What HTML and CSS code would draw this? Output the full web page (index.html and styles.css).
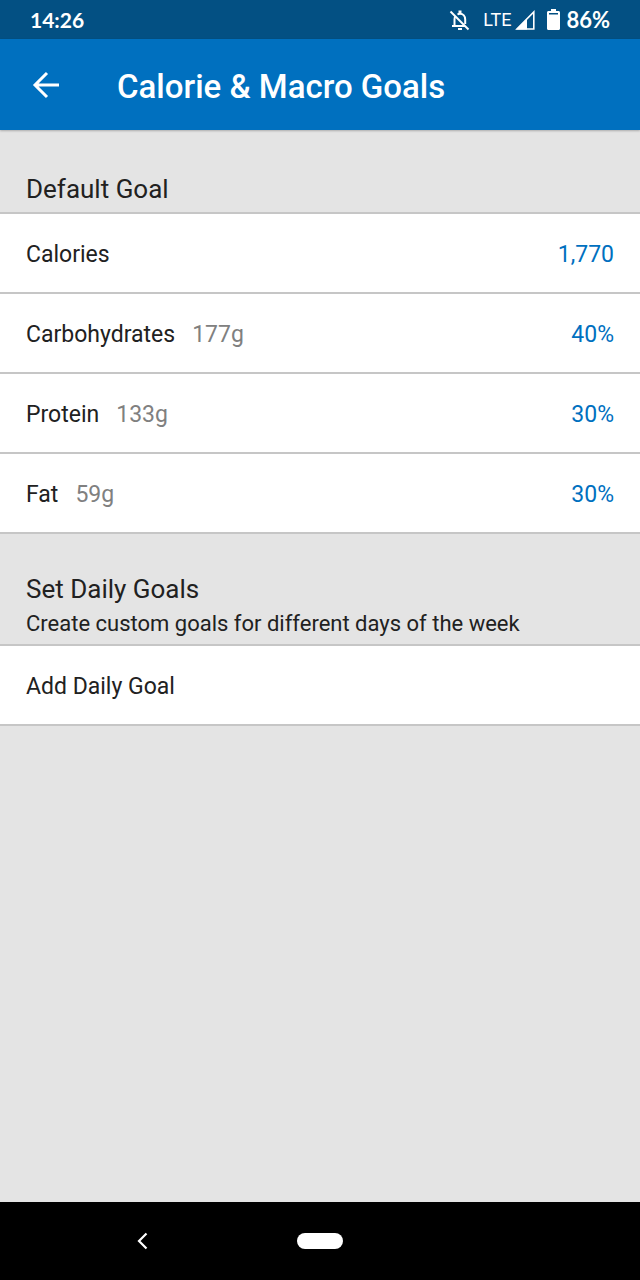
FILE: index.html
```html
<!DOCTYPE html>
<html lang="en">
<head>
    <meta charset="UTF-8">
    <meta name="viewport" content="width=device-width, initial-scale=1.0">
    <title>Calorie &amp; Macro Goals</title>
    <link rel="stylesheet" href="styles.css">
</head>
<body>
    <div class="status-bar">
        <span class="status-time">14:26</span>
        <div class="status-icons">
            <svg class="icon-bell" width="22" height="22" viewBox="0 0 22 22" fill="none" stroke="currentColor" stroke-width="2">
                <path d="M1.500 2.500l18 18"/>
                <path d="M3 17h13M5.500 17v-6.500c0-1.500.3-2.600 1-3.500M8.500 5.500c.8-.5 1.600-.7 2.500-.7 3.200 0 5.200 2.400 5.200 5.700v4.500"/>
                <path d="M11 1.500v3" stroke-width="3"/>
                <path d="M9 20h4"/>
            </svg>
            <span class="network">LTE</span>
            <svg class="icon-signal" width="20" height="20" viewBox="0 0 20 20">
                <path d="M18.800 2v17H2z" fill="none" stroke="currentColor" stroke-width="1.600"/>
                <path d="M12 8.500V19.500H1z" fill="currentColor"/>
            </svg>
            <svg class="icon-battery" width="13" height="21" viewBox="0 0 13 21">
                <path d="M4 0h5v2h2.500C12.400 2 13 2.600 13 3.500v16c0 .9-.6 1.500-1.500 1.500h-10C.6 21 0 20.400 0 19.500v-16C0 2.600.6 2 1.500 2H4z" fill="currentColor"/>
                <path d="M2 4h9v1.500H2z" fill="#035083"/>
            </svg>
            <span class="battery-level">86%</span>
        </div>
    </div>

    <header class="app-bar">
        <button class="back-button" type="button" aria-label="Back">
            <svg width="28" height="28" viewBox="0 0 28 28" fill="none" stroke="currentColor" stroke-width="3">
                <path d="M27 14H3M15 2L3 14l12 12"/>
            </svg>
        </button>
        <h1>Calorie &amp; Macro Goals</h1>
    </header>

    <main class="content">
        <div class="section-header">
            <h2>Default Goal</h2>
        </div>
        <ul class="goal-list">
            <li class="goal-row">
                <span class="goal-name">Calories</span>
                <button class="goal-value" type="button">1,770</button>
            </li>
            <li class="goal-row">
                <span class="goal-name">Carbohydrates</span>
                <span class="goal-grams">177g</span>
                <button class="goal-value" type="button">40%</button>
            </li>
            <li class="goal-row">
                <span class="goal-name">Protein</span>
                <span class="goal-grams">133g</span>
                <button class="goal-value" type="button">30%</button>
            </li>
            <li class="goal-row">
                <span class="goal-name">Fat</span>
                <span class="goal-grams">59g</span>
                <button class="goal-value" type="button">30%</button>
            </li>
        </ul>

        <div class="section-header">
            <h2>Set Daily Goals</h2>
            <p>Create custom goals for different days of the week</p>
        </div>
        <ul class="goal-list">
            <li><button class="goal-row add-goal" type="button">Add Daily Goal</button></li>
        </ul>
    </main>

    <nav class="nav-bar">
        <button class="nav-back" type="button" aria-label="System back">
            <svg width="12" height="18" viewBox="0 0 12 18" fill="none" stroke="currentColor" stroke-width="2.200">
                <path d="M10.500 1.500L3 9l7.500 7.500"/>
            </svg>
        </button>
        <button class="nav-home" type="button" aria-label="Home"></button>
    </nav>
</body>
</html>
```

FILE: styles.css
```css
* {
    box-sizing: border-box;
}
body {
    display: flex;
    flex-direction: column;
    min-height: 100vh;
    margin: 0;
    font-family: Roboto, sans-serif;
    background-color: #e4e4e4;
    color: #212121;
}
button {
    padding: 0;
    border: none;
    background: none;
    font: inherit;
    color: inherit;
    cursor: pointer;
}
svg {
    display: block;
}
.status-bar {
    display: flex;
    justify-content: space-between;
    align-items: center;
    height: 39px;
    padding: 0 30px;
    background-color: #035083;
    color: white;
}
.status-time,
.battery-level {
    font-family: Lato, sans-serif;
    font-size: 22px;
    font-weight: bold;
}
.status-time {
    font-size: 21px;
}
.status-icons {
    display: flex;
    align-items: center;
}
.icon-bell {
    margin-right: 12px;
}
.network {
    margin-right: 4px;
    font-size: 18px;
}
.icon-battery {
    margin: 0 6px 0 12px;
}
.app-bar {
    display: flex;
    align-items: center;
    gap: 57px;
    height: 91px;
    padding: 0 32px;
    background-color: #0070bf;
    color: white;
    box-shadow: 0 1px 2px rgba(0,0,0,0.25);
}
h1 {
    margin: 4px 0 0;
    font-size: 33px;
    font-weight: 500;
}
.content {
    flex: 1;
    padding-top: 4px;
}
.section-header {
    padding: 38px 26px 6px;
}
.section-header h2 {
    margin: 0;
    font-size: 26px;
    font-weight: normal;
    line-height: 34px;
}
.section-header p {
    margin: 0;
    padding-top: 4px;
    font-size: 22px;
    line-height: 28px;
}
.goal-list {
    margin: 0;
    padding: 0;
    list-style: none;
    background-color: white;
    border-top: 2px solid #c6c6c6;
}
.goal-row {
    display: flex;
    align-items: center;
    width: 100%;
    height: 80px;
    padding: 2px 26px 0;
    border-bottom: 2px solid #c6c6c6;
    font-size: 23px;
}
.goal-grams {
    margin-left: 17px;
    color: #808080;
}
.goal-value {
    margin-left: auto;
    color: #0070bf;
}
.nav-bar {
    display: grid;
    grid-template-columns: 1fr auto 1fr;
    gap: 14px;
    align-items: center;
    justify-items: center;
    height: 78px;
    background-color: black;
    color: white;
}
.nav-home {
    width: 46px;
    height: 16px;
    border-radius: 8px;
    background-color: white;
}
```
